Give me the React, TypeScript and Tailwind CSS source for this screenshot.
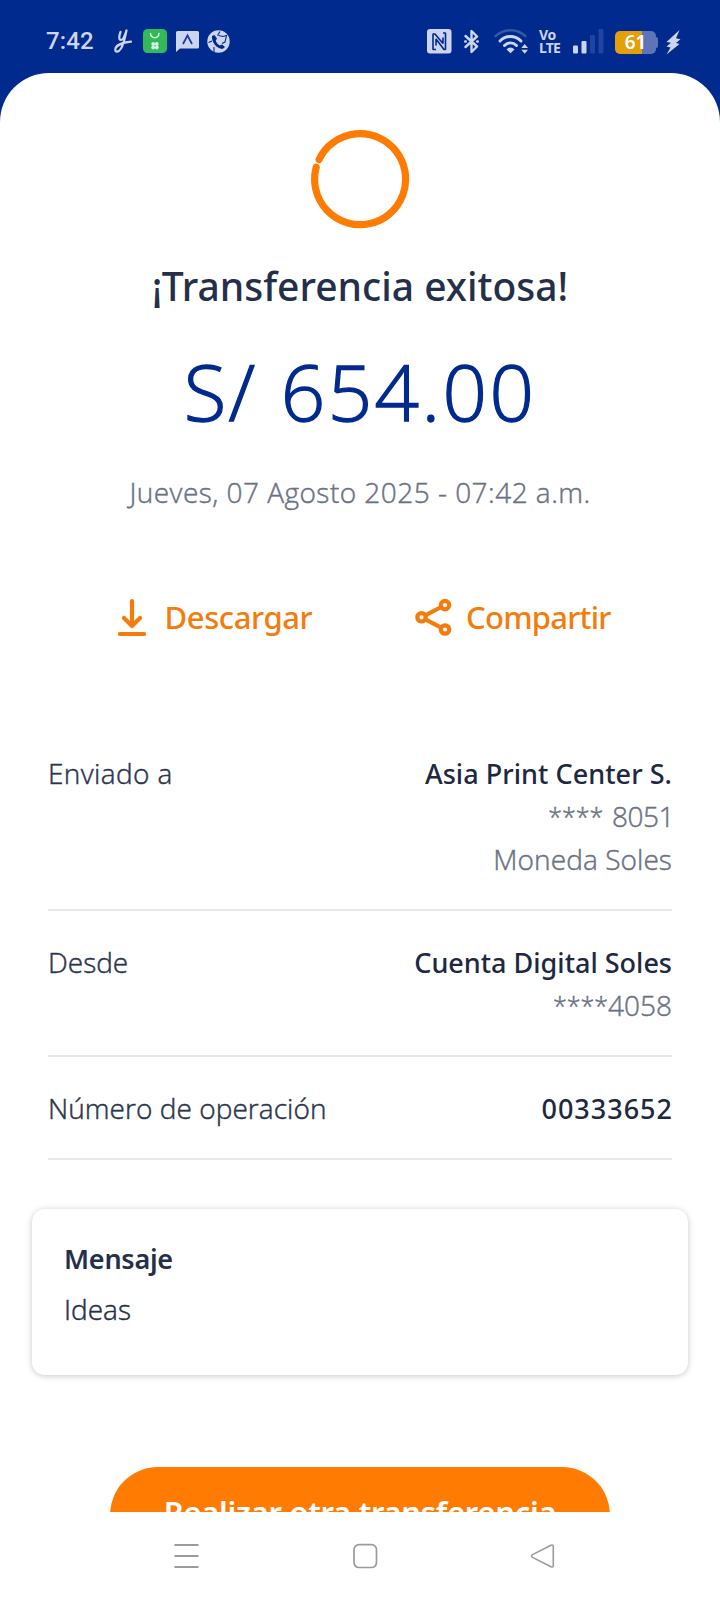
import React from "react";

const light = "font-['Open_Sans'] font-light [-webkit-text-stroke:0.45px_currentColor]";
const semi = "font-['Noto_Sans'] font-medium";

function StatusBar() {
  return (
    <header className="flex h-[73px] shrink-0 items-start pt-[29px] pl-[46px] text-[#ccd4ee]">
      <span className="h-6 w-[68px] font-['Roboto'] text-[24px] leading-[25px] font-medium tracking-[0.1px] whitespace-nowrap">7:42</span>
      <svg className="h-6 w-[18px]" viewBox="0 0 18 24" fill="none" stroke="currentColor" strokeWidth="2.200" strokeLinecap="round" strokeLinejoin="round">
        <path d="M6.500 3C5 7 4.500 11 7 11C9.500 11 11 6 12.500 1.500C11 8 10 15 7 19.500C4.500 23.500 1 23.500 1.300 20.500C1.700 16.500 8 13.500 17 12.700" />
      </svg>
      <svg className="ml-[11px] size-6" viewBox="0 0 24 24" fill="none">
        <rect width="24" height="24" rx="4.500" fill="#31b95a" />
        <path d="M7.500 4.500C8 10 15.500 10 16 4.500" stroke="#d5f5dd" strokeWidth="1.500" strokeLinecap="round" />
        <g fill="#d5f5dd">
          <circle cx="10.200" cy="15" r="1.900" /><circle cx="13.800" cy="15" r="1.900" />
          <circle cx="10.200" cy="18.500" r="1.900" /><circle cx="13.800" cy="18.500" r="1.900" />
        </g>
      </svg>
      <svg className="mt-[2px] ml-[9px] h-[22px] w-[23px]" viewBox="0 0 23 22">
        <path d="M1.500 0H21.500Q23 0 23 1.500V16Q23 17.500 21.500 17.500H4L0 21V1.500Q0 0 1.500 0Z" fill="currentColor" />
        <path d="M7 13L11.500 4.500L16 13" fill="none" stroke="#1c3f99" strokeWidth="1.800" />
      </svg>
      <svg className="mt-px ml-2 size-[23px]" viewBox="0 0 23 23">
        <circle cx="11.500" cy="11.500" r="11.200" fill="currentColor" />
        <path d="M5 6C4.500 12 9 18.500 15.500 19L18 17L15 14.500L12.800 15.500C10.800 14.500 9.300 12.500 8.800 10.500L10 8.500L7.500 5Z" fill="#00298c" />
        <path d="M10.500 5.500L13 1.500M11.500 5.500L16 6.500L19.500 5.500L18 12L15 13.500M1.500 12.500L5 11M7 17V22" fill="none" stroke="#00298c" strokeWidth="1.100" />
      </svg>

      <svg className="ml-[196.500px] h-[25px] w-[25px]" viewBox="0 0 25 25">
        <rect width="24.500" height="24.500" rx="3" fill="currentColor" />
        <path d="M9 20.500H6V5H8L16 14.500V8.500M16 4H18.500V20.500H17L9 10V16.500" fill="none" stroke="#00298c" strokeWidth="1.600" strokeLinejoin="bevel" />
      </svg>
      <svg className="ml-[12.500px] h-[25px] w-[15px]" viewBox="0 0 15 25" fill="none" stroke="currentColor" strokeWidth="2.400" strokeLinejoin="round" strokeLinecap="round">
        <path d="M1.500 7L13 17.500L7.500 23V2L13 7.500L1.500 18" />
        <path d="M1.200 12.500H1.800M13.200 12.500H13.800" />
      </svg>
      <svg className="ml-[15px] h-[25px] w-[34px]" viewBox="0 0 34 25" fill="none" stroke="currentColor" strokeWidth="2.900" strokeLinecap="round">
        <path d="M1.500 7.200C9.500 -0.800 23.500 -0.800 31.500 7.200" stroke="#3757a8" strokeWidth="2.400" />
        <path d="M6 12C12 6 21 6 27 12M10.500 16.500C14 13 19 13 22.500 16.500" />
        <path d="M12.500 20.500Q16.500 16.500 20.500 20.500L16.500 24.200Z" fill="currentColor" stroke="none" />
        <path d="M27.300 19L30.700 15L34 19ZM27.300 20.800L30.700 24.800L34 20.800Z" fill="currentColor" stroke="none" />
      </svg>
      <div className="-mt-px ml-[11px] flex h-[26px] w-[23px] flex-col font-['Noto_Sans'] text-[14px] leading-[13px] font-bold tracking-[-0.3px]">
        <span>Vo</span>
        <span className="tracking-[-0.8px]">LTE</span>
      </div>
      <svg className="ml-[11px] h-[25px] w-[31px]" viewBox="0 0 31 25" fill="currentColor">
        <rect x="0" y="16.500" width="5" height="8" rx="1" />
        <rect x="8.500" y="12" width="5" height="12.500" rx="1" />
        <g fill="#2144a0"><rect x="17" y="6" width="5" height="18.500" rx="1" /><rect x="25.500" y="0" width="5" height="24.500" rx="1" /></g>
      </svg>
      <div className="mt-[2px] ml-[11px] flex items-center">
        <div className="flex h-[23px] w-[41px] items-center justify-center rounded-[5px] bg-linear-to-r from-[#e4a00a] from-65% to-[#5d75b8] to-65% font-['Noto_Sans'] text-[19px] leading-[21px] font-semibold text-white">
          <span className="-mt-px">61</span>
        </div>
        <div className="h-[11px] w-[2px] rounded-r bg-[#5d75b8]" />
      </div>
      <svg className="mt-px ml-[8px] h-[25px] w-[15px]" viewBox="0 0 15 25" fill="currentColor">
        <path d="M13.500 0L0.500 12L5 12.800L0.500 16.500L4.500 17.500L0.500 24.500L13.500 14L10 13L14.500 9.200L10 8.200Z" />
      </svg>
    </header>
  );
}

function Amount() {
  return (
    <section className="flex flex-col items-center">
      <svg className="mt-[56px] size-[100px]" viewBox="310 129 100 100" fill="none">
        <path d="M319.100 159.500A45.500 45.500 0 1 1 316.200 167.300" stroke="#ff7b02" strokeWidth="7.200" strokeLinecap="round" />
      </svg>
      <h1 className={`${semi} mt-[32px] h-[50px] text-[39px] leading-[50px] whitespace-nowrap text-[#242f49]`}>¡Transferencia exitosa!</h1>
      <p className="mt-[30px] h-[100px] font-['Open_Sans'] text-[78px] leading-[100px] font-light tracking-[2.400px] whitespace-nowrap text-[#002a8d] [-webkit-text-stroke:1.300px_currentColor] [word-spacing:0.500px]">S/ 654.00</p>
      <p className={`${light} mt-[31px] h-[40px] text-[28px] leading-[40px] tracking-[0.470px] whitespace-nowrap text-[#6b7285]`}>Jueves, 07 Agosto 2025 - 07:42 a.m.</p>
    </section>
  );
}

function Actions() {
  const label = `${semi} text-[31px] leading-[44px] whitespace-nowrap`;
  return (
    <div className="mt-[83px] flex h-[44px] pl-[118px] text-[#f47c0c]">
      <button className="flex w-[297px] items-center">
        <svg className="h-[38px] w-[28px]" viewBox="0 0 28 38" fill="none" stroke="currentColor" strokeWidth="4.200" strokeLinecap="round" strokeLinejoin="round">
          <path d="M14 3V27.500M6 20L14 28L22 20M2 36H26" />
        </svg>
        <span className={`${label} ml-[18.500px] tracking-[-0.400px]`}>Descargar</span>
      </button>
      <button className="flex items-center">
        <svg className="h-[38px] w-[37px]" viewBox="0 0 37 38" fill="none" stroke="currentColor" strokeWidth="4.200">
          <circle cx="6.500" cy="19.300" r="4.200" /><circle cx="30" cy="7.100" r="4.200" /><circle cx="30" cy="31.500" r="4.200" />
          <path d="M10.300 17.300L26.200 9M10.300 21.300L26.200 29.600" />
        </svg>
        <span className={`${label} ml-[14px] tracking-[-0.750px]`}>Compartir</span>
      </button>
    </div>
  );
}

function Masked({ digits, digitsClass = "" }: { digits: string; digitsClass?: string }) {
  return (
    <span className={`${light} text-[#6b7285]`}>
      <span className="align-[1px] text-[25px] leading-none">****</span>
      <span className={digitsClass}>{digits}</span>
    </span>
  );
}

function Row({ label, labelClass = "", title, titleClass = "", box, children }: {
  label: string; labelClass?: string; title: string; titleClass?: string; box: string; children?: React.ReactNode;
}) {
  return (
    <div className={`flex justify-between border-b-2 border-[#e7e8ea] text-[28px] leading-[43px] whitespace-nowrap ${box}`}>
      <span className={`${light} text-[#2a344b] ${labelClass}`}>{label}</span>
      <div className="flex flex-col items-end">
        <span className={`${semi} text-[27px] text-[#1d2842] ${titleClass}`}>{title}</span>
        {children}
      </div>
    </div>
  );
}

export default function App() {
  return (
    <div className="flex h-[1600px] w-[720px] flex-col overflow-hidden bg-[#002a8d]">
      <StatusBar />
      <main className="flex h-[1439px] shrink-0 flex-col overflow-hidden rounded-t-[49px] bg-white">
        <Amount />
        <Actions />
        <div className="mt-[113px] px-[48px]">
          <Row label="Enviado a" labelClass="tracking-[0.400px]" title="Asia Print Center S." titleClass="tracking-[0.050px]" box="h-[159px]">
            <Masked digits=" 8051" digitsClass="-mr-[2px] tracking-[-0.500px] [word-spacing:2px]" />
            <span className={`${light} tracking-[0.080px] text-[#6b7285]`}>Moneda Soles</span>
          </Row>
          <Row label="Desde" title="Cuenta Digital Soles" box="h-[146px] pt-[30px]">
            <Masked digits="4058" />
          </Row>
          <Row label="Número de operación" labelClass="tracking-[0.050px]" title="00333652" titleClass="-mr-px tracking-[1px]" box="h-[103px] pt-[30px]" />
        </div>
        <section className="mx-[32px] mt-[49px] h-[166px] shrink-0 rounded-[13px] bg-white pt-[27px] pl-[32px] text-[#242f49] shadow-[0_1px_6px_rgba(0,0,0,0.22)]">
          <h2 className="font-['Noto_Sans'] text-[27px] leading-[46px] font-semibold tracking-[-0.250px]">Mensaje</h2>
          <p className={`${light} text-[28px] leading-[55px]`}>Ideas</p>
        </section>
        <button className="mt-[92px] ml-[110px] flex h-[96px] w-[500px] shrink-0 justify-center rounded-full bg-[#ff7b02] pt-[23px]">
          <span className="font-['Noto_Sans'] text-[31px] leading-[44px] font-semibold tracking-[-0.300px] whitespace-nowrap text-white">Realizar otra transferencia</span>
        </button>
      </main>
      <nav className="flex h-[88px] shrink-0 items-start bg-white pt-[30px] pl-[174px] text-[#9b9b9b]">
        <svg className="h-[27px] w-[25px]" viewBox="0 0 25 27" fill="none" stroke="currentColor" strokeWidth="2"><path d="M0.500 3H24.500M0.500 14H24.500M0.500 25H24.500" /></svg>
        <svg className="ml-[153px] h-[27px] w-[26px]" viewBox="0 0 26 27" fill="none" stroke="currentColor" strokeWidth="1.700"><rect x="2" y="2.700" width="22.500" height="22.800" rx="5" /></svg>
        <svg className="ml-[152px] h-[27px] w-[25px]" viewBox="0 0 25 27" fill="none" stroke="currentColor" strokeWidth="1.600" strokeLinejoin="round"><path d="M21 3.200L2.500 12.600Q0.500 14 2.500 15.400L21 24.800Q23.300 25.500 23.300 23.500V4.500Q23.300 2.500 21 3.200Z" /></svg>
      </nav>
    </div>
  );
}
